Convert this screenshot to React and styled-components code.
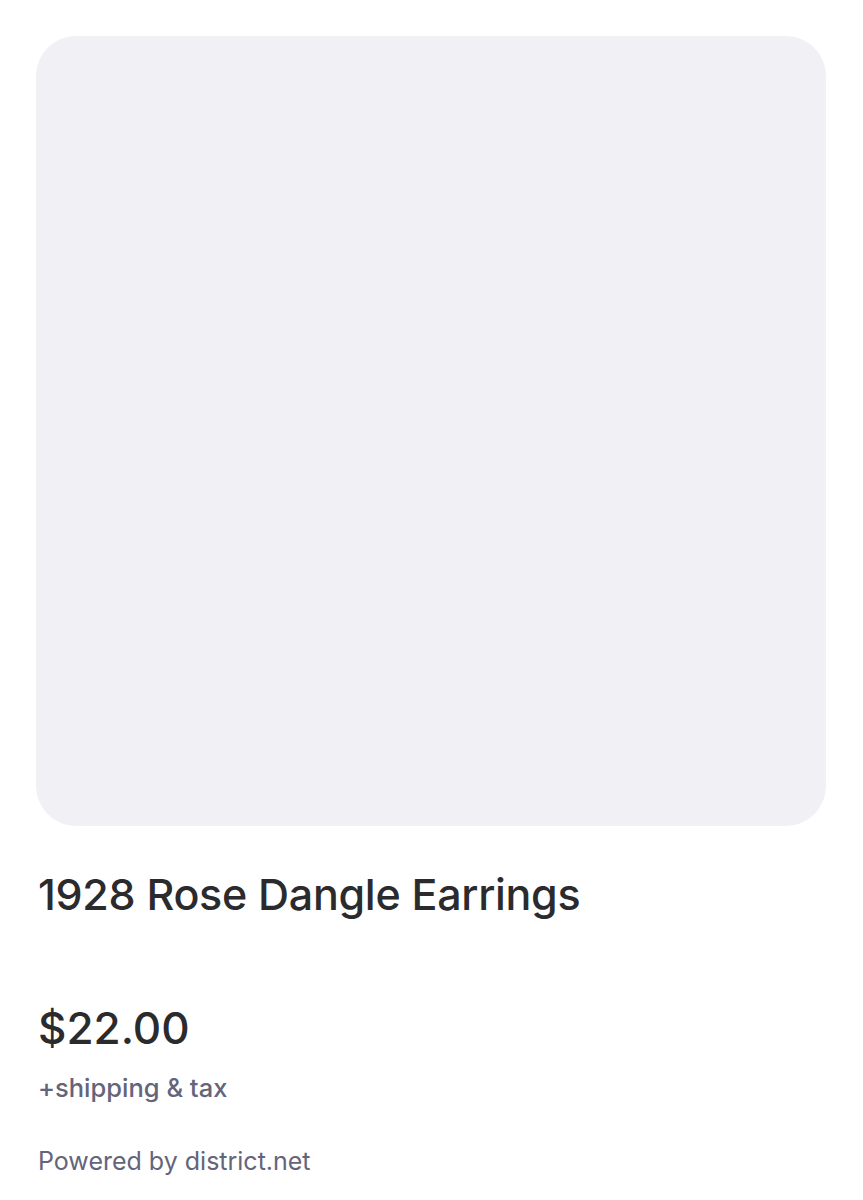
import React from 'react'
import styled, { createGlobalStyle } from 'styled-components'

const GlobalStyle = createGlobalStyle`
body {
  margin: 0;
  background: #ffffff;
  font-family: Inter, "Noto Sans", sans-serif;
}
`

const Page = styled.div`
width: 863px;
padding: 36px 36px 0;
box-sizing: border-box;
display: flex;
flex-direction: column;
`
const ImageBox = styled.div`
width: 790px;
height: 790px;
background-color: #f1f1f5;
border-radius: 40px;
`
const Title = styled.h1`
margin: 42px 0 0 2px;
font-size: 43px;
font-weight: 500;
line-height: 52px;
letter-spacing: -0.3px;
color: #2b2b2e;
`
const Price = styled.div`
margin: 82px 0 0 2px;
font-size: 44px;
font-weight: 500;
line-height: 52px;
color: #2b2b2e;
`
const Note = styled.div`
margin: ${props => props.top}px 0 0 2px;
font-size: ${props => props.size}px;
font-weight: ${props => props.weight};
line-height: 32px;
color: #64647a;
`

export default function App() {
    return (
        <>
            <GlobalStyle />
            <Page>
                <ImageBox />
                <Title>1928 Rose Dangle Earrings</Title>
                <Price>$22.00</Price>
                <Note top={18} size={25.5} weight={500}>+shipping &amp; tax</Note>
                <Note top={41} size={25} weight={400}>Powered by district.net</Note>
            </Page>
        </>
    )
}
